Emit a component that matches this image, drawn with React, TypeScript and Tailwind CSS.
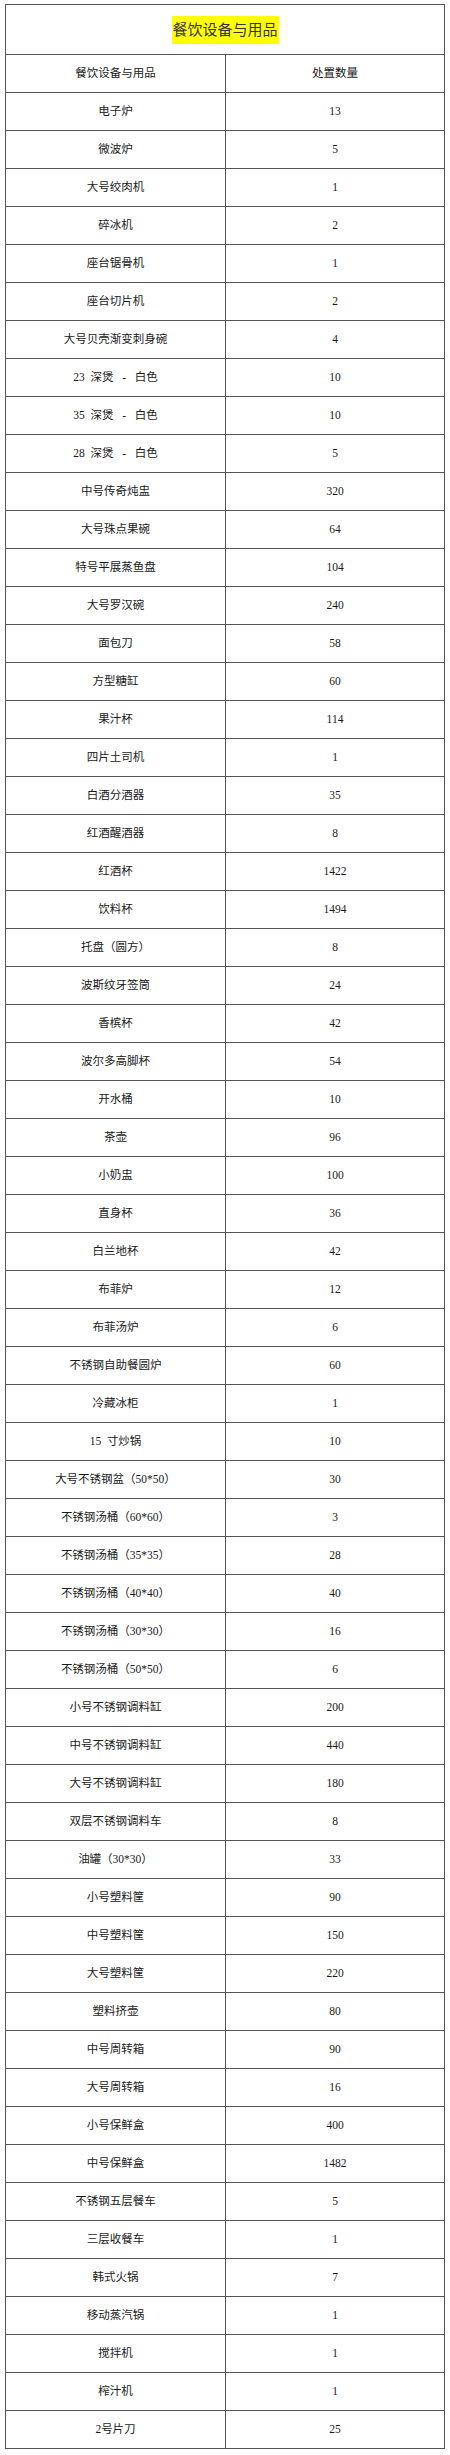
const ITEMS: [string, string][] = [
  ["电子炉", "13"],
  ["微波炉", "5"],
  ["大号绞肉机", "1"],
  ["碎冰机", "2"],
  ["座台锯骨机", "1"],
  ["座台切片机", "2"],
  ["大号贝壳渐变刺身碗", "4"],
  ["23  深煲   -   白色", "10"],
  ["35  深煲   -   白色", "10"],
  ["28  深煲   -   白色", "5"],
  ["中号传奇炖盅", "320"],
  ["大号珠点果碗", "64"],
  ["特号平展蒸鱼盘", "104"],
  ["大号罗汉碗", "240"],
  ["面包刀", "58"],
  ["方型糖缸", "60"],
  ["果汁杯", "114"],
  ["四片土司机", "1"],
  ["白酒分酒器", "35"],
  ["红酒醒酒器", "8"],
  ["红酒杯", "1422"],
  ["饮料杯", "1494"],
  ["托盘（圆方）", "8"],
  ["波斯纹牙签筒", "24"],
  ["香槟杯", "42"],
  ["波尔多高脚杯", "54"],
  ["开水桶", "10"],
  ["茶壶", "96"],
  ["小奶盅", "100"],
  ["直身杯", "36"],
  ["白兰地杯", "42"],
  ["布菲炉", "12"],
  ["布菲汤炉", "6"],
  ["不锈钢自助餐圆炉", "60"],
  ["冷藏冰柜", "1"],
  ["15  寸炒锅", "10"],
  ["大号不锈钢盆（50*50）", "30"],
  ["不锈钢汤桶（60*60）", "3"],
  ["不锈钢汤桶（35*35）", "28"],
  ["不锈钢汤桶（40*40）", "40"],
  ["不锈钢汤桶（30*30）", "16"],
  ["不锈钢汤桶（50*50）", "6"],
  ["小号不锈钢调料缸", "200"],
  ["中号不锈钢调料缸", "440"],
  ["大号不锈钢调料缸", "180"],
  ["双层不锈钢调料车", "8"],
  ["油罐（30*30）", "33"],
  ["小号塑料筐", "90"],
  ["中号塑料筐", "150"],
  ["大号塑料筐", "220"],
  ["塑料挤壶", "80"],
  ["中号周转箱", "90"],
  ["大号周转箱", "16"],
  ["小号保鲜盒", "400"],
  ["中号保鲜盒", "1482"],
  ["不锈钢五层餐车", "5"],
  ["三层收餐车", "1"],
  ["韩式火锅", "7"],
  ["移动蒸汽锅", "1"],
  ["搅拌机", "1"],
  ["榨汁机", "1"],
  ["2号片刀", "25"],
];

const cell = "border border-[#555] text-center align-middle p-0 whitespace-pre";

export default function App() {
  return (
    <div className="min-h-[2455px] bg-white pt-[4px] pl-[5px] text-[#1a1a1a] font-['Liberation_Serif','Noto_Sans_CJK_SC',serif]">
      <table className="w-[439px] border-collapse table-fixed text-[11.5px]">
        <colgroup>
          <col className="w-[220px]" />
          <col className="w-[219px]" />
        </colgroup>
        <tbody>
          <tr className="h-[50px]">
            <td colSpan={2} className={cell}>
              <span className="inline-block bg-[#ffff00] px-[1px] text-[15px] leading-[28px] text-[#333]">
                餐饮设备与用品
              </span>
            </td>
          </tr>
          <tr className="h-[38px]">
            <td className={cell}>餐饮设备与用品</td>
            <td className={cell}>处置数量</td>
          </tr>
          {ITEMS.map(([name, qty]) => (
            <tr key={name} className="h-[38px]">
              <td className={cell}>{name}</td>
              <td className={cell}>{qty}</td>
            </tr>
          ))}
        </tbody>
      </table>
    </div>
  );
}
